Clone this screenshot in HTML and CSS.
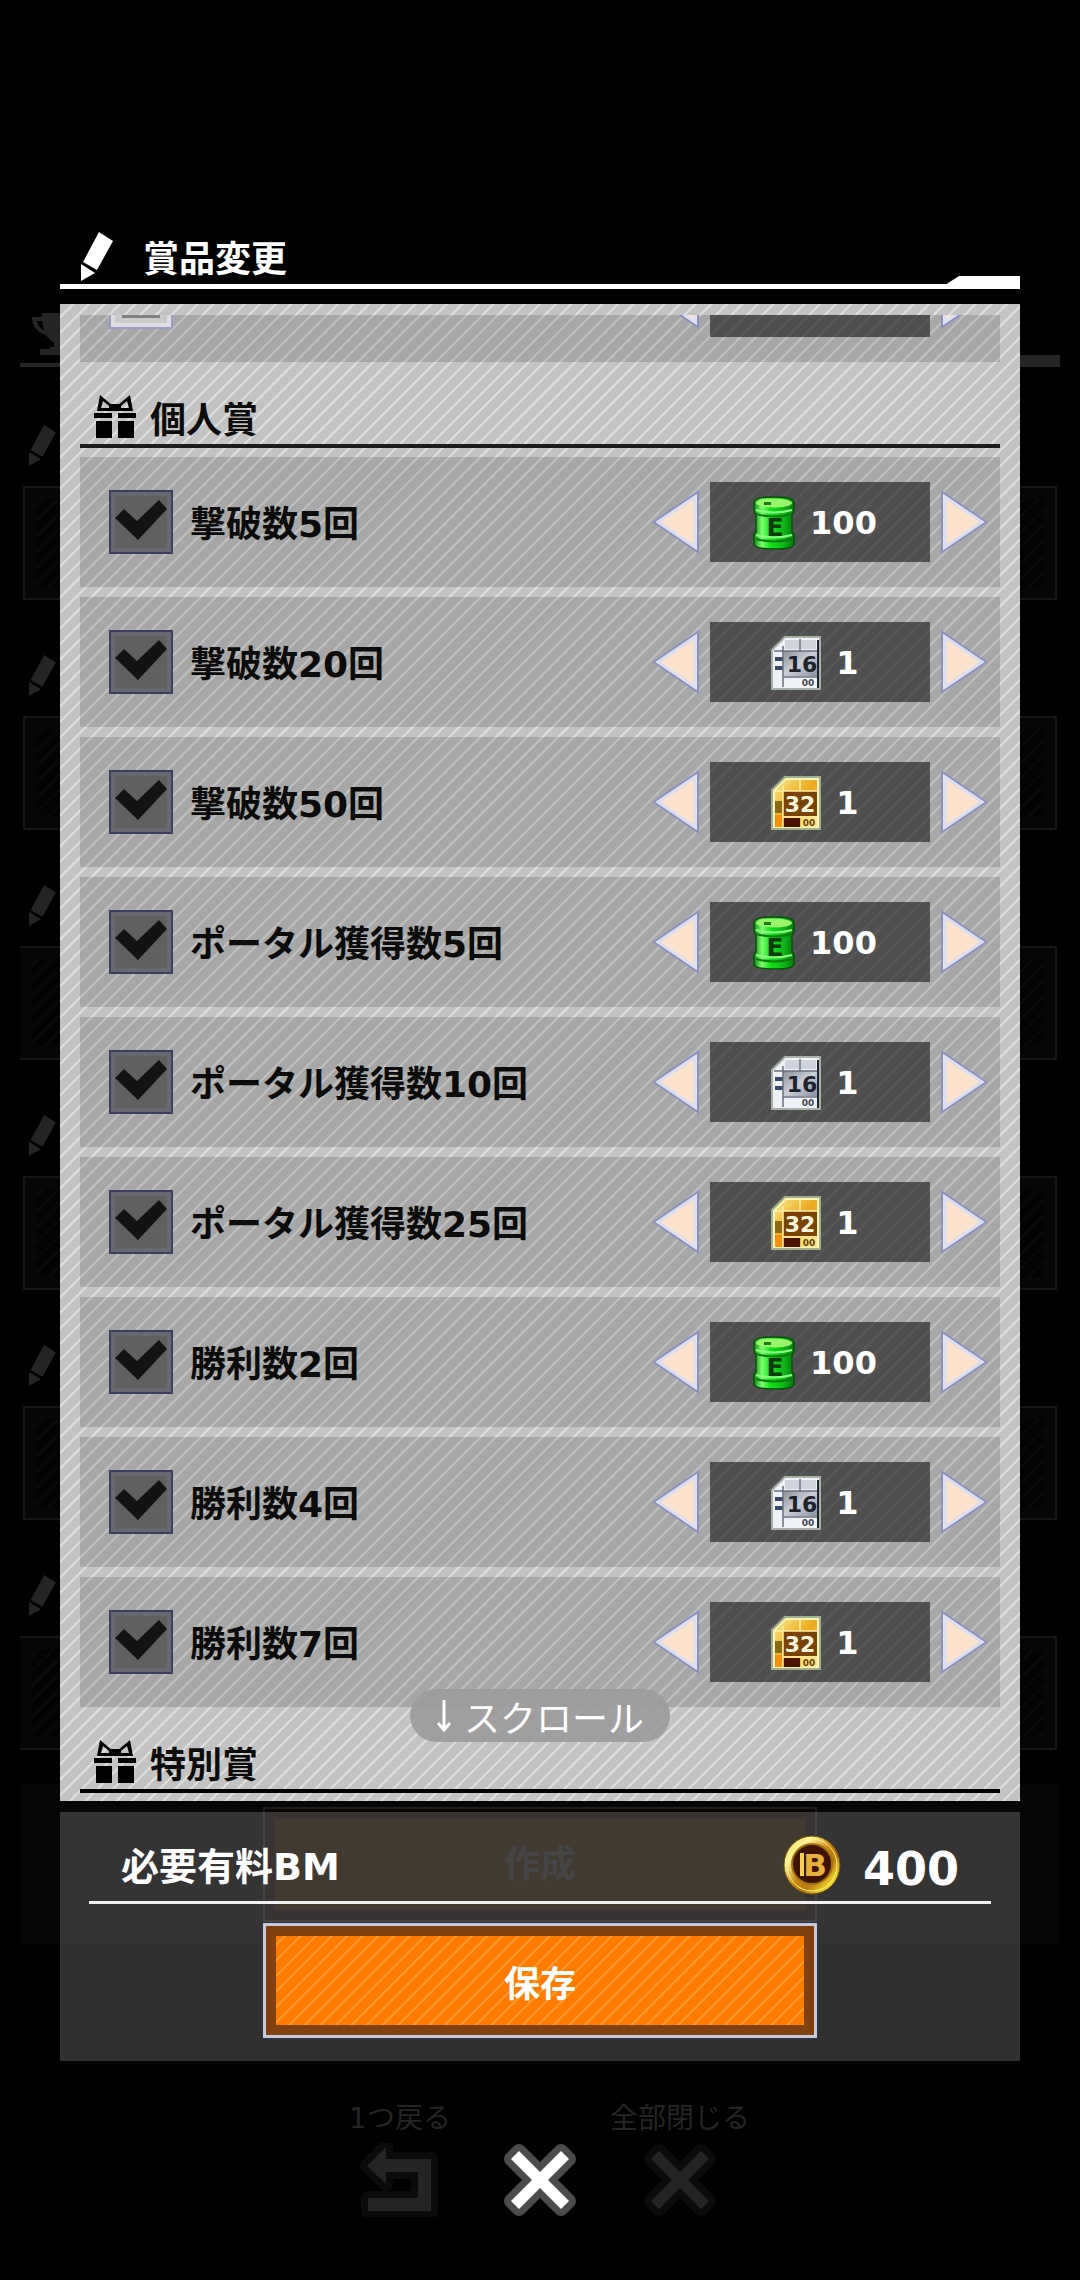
FILE: index.html
```html
<!DOCTYPE html>
<html lang="ja">
<head>
  <meta charset="UTF-8" />
  <meta name="viewport" content="width=device-width, initial-scale=1.0"/>
  <title>賞品変更</title>
  <link rel="stylesheet" href="styles.css">
</head>
<body>

  <!-- shared gradients -->
  <svg class="gradients" width="0" height="0" aria-hidden="true">
    <defs>
      <linearGradient id="barrelFill">
        <stop offset="0" stop-color="#0b8a10"/>
        <stop offset="0.2" stop-color="#7dff70"/>
        <stop offset="0.4" stop-color="#12e41a"/>
        <stop offset="0.75" stop-color="#0fb418"/>
        <stop offset="1" stop-color="#077a0c"/>
      </linearGradient>
      <linearGradient id="silverFill" x1="0" y1="0" x2="1" y2="1">
        <stop offset="0" stop-color="#8b9099"/>
        <stop offset="0.5" stop-color="#c9ced8"/>
        <stop offset="1" stop-color="#8a909c"/>
      </linearGradient>
      <linearGradient id="goldFill" x1="0" y1="0" x2="1" y2="1">
        <stop offset="0" stop-color="#f7e98a"/>
        <stop offset="0.5" stop-color="#eda81c"/>
        <stop offset="1" stop-color="#f8d35a"/>
      </linearGradient>
      <linearGradient id="coinFill" x1="0" y1="0" x2="1" y2="1">
        <stop offset="0" stop-color="#e8c22c"/>
        <stop offset="0.25" stop-color="#fff7a0"/>
        <stop offset="0.5" stop-color="#c8860f"/>
        <stop offset="0.65" stop-color="#b87a12"/>
        <stop offset="0.85" stop-color="#f6e02c"/>
        <stop offset="1" stop-color="#c89a1c"/>
      </linearGradient>
    </defs>
  </svg>

  <!-- shared icons -->
  <svg class="icons" aria-hidden="true">
    <symbol id="pencil" viewBox="0 0 33 49">
      <path d="M19 0L33 9L17 38L3 30ZM1 32L15 41L1 49Z"/>
    </symbol>
    <symbol id="gift" viewBox="0 0 42 43">
      <path d="M2 26h16v17H2zM24 26h16v17H24zM0 18h18v5H0zM24 18h18v5H24zM17 9h8v7H17z"/>
      <path fill-rule="evenodd" d="M6 0L18 10V16H3ZM9 6L7 13H15V11ZM36 0L24 10V16H39ZM33 6L35 13H27V11Z"/>
    </symbol>
    <symbol id="trophy" viewBox="0 0 56 42">
      <path fill-rule="evenodd" d="M10 0H46V4H56C56 14 50 20 42 22C40 26 36 28 34 29V34H38V36H48V42H8V36H18V34H22V29C18 28 16 25 14 22C6 20 0 14 0 4H10ZM10 8H5C6 13 8 15 12 17Z"/>
    </symbol>
    <symbol id="arrow-left" viewBox="0 0 47 64">
      <path fill="#fde3cc" stroke="#8890c4" stroke-width="2" d="M2 32L46 2V62Z"/>
      <path fill="#fde3cc" stroke="#dcdff2" stroke-width="3" d="M6 32L43 7V57Z"/>
    </symbol>
    <symbol id="arrow-right" viewBox="0 0 47 64">
      <path fill="#fde3cc" stroke="#8890c4" stroke-width="2" d="M45 32L1 2V62Z"/>
      <path fill="#fde3cc" stroke="#dcdff2" stroke-width="3" d="M41 32L4 7V57Z"/>
    </symbol>
    <symbol id="barrel" viewBox="0 0 42 54">
      <path fill="url(#barrelFill)" stroke="#07520a" stroke-width="1.5" d="M1 6Q1 1 21 1T41 6V15Q41 17 39 18V36Q41 37 41 39V48Q41 53 21 53T1 48V39Q1 37 3 36V18Q1 17 1 15Z"/>
      <ellipse cx="21" cy="7" rx="18" ry="4.5" fill="#9af56a"/>
      <path fill="#1c7a18" d="M11 6h7v3h-7z"/>
      <path fill="none" stroke="#8bff80" stroke-width="2" d="M3 14Q21 19 39 14M3 39Q21 44 39 39"/>
      <path fill="none" stroke="#087a0d" stroke-width="2" d="M3 18Q21 23 39 18M3 43Q21 48 39 43"/>
      <text x="22" y="40" text-anchor="middle" class="glyph" font-size="25" fill="#063c08">E</text>
    </symbol>
    <symbol id="chip16" viewBox="0 0 50 54">
      <path fill="#eef1f6" stroke="#a9b0a8" stroke-width="2" d="M1 14L14 1H49V53H1Z"/>
      <path fill="#cfd4dc" d="M14 4h14v9H14zM30 4h15v9H30z"/>
      <path fill="url(#silverFill)" d="M12 15h34v25H12z"/>
      <path fill="#3a4a68" d="M4 21h8v4H4zM4 30h8v4H4z"/>
      <path stroke="#69707e" stroke-width="1.5" fill="none" d="M12 10V51M29 3V15M3 15H46M12 41H46"/>
      <path fill="#22262e" d="M46 4h2v48h-2z"/>
      <text x="31" y="36" text-anchor="middle" class="glyph" font-size="22" fill="#1d222c">16</text>
      <path fill="#f4f6fa" d="M29 42h16v9H29z"/>
      <text x="37" y="50" text-anchor="middle" class="glyph" font-size="9" fill="#3c4352">00</text>
    </symbol>
    <symbol id="chip32" viewBox="0 0 50 54">
      <path fill="#fff5b8" stroke="#9fb08a" stroke-width="2" d="M1 14L14 1H49V53H1Z"/>
      <path fill="url(#goldFill)" d="M4 15L15 4H46V51H4Z"/>
      <path fill="#8a6a10" d="M4 25h7v12H4z"/>
      <path fill="#f58f10" d="M4 39h7v12H4z"/>
      <path fill="#7a4204" d="M12 15h34v25H12z"/>
      <path fill="#4a1400" d="M12 42h17v9H12z"/>
      <path stroke="#fff0a8" stroke-width="1.5" fill="none" d="M12 10V51M29 3V15M3 15H46M12 41H46"/>
      <text x="29" y="36" text-anchor="middle" class="glyph" font-size="22" fill="#fff6dc">32</text>
      <path fill="#fbe48a" d="M30 42h16v9H30z"/>
      <text x="38" y="50" text-anchor="middle" class="glyph" font-size="9" fill="#6a3c04">00</text>
    </symbol>
    <symbol id="cross" viewBox="0 0 74 74">
      <path class="outlined" d="M16 8L37 29L58 8L66 16L45 37L66 58L58 66L37 45L16 66L8 58L29 37L8 16Z"/>
    </symbol>
    <symbol id="back" viewBox="0 0 80 74">
      <path class="outlined" d="M7 23L26 4V16H71V68H8V55H58V29H26V41Z"/>
    </symbol>
  </svg>

  <!-- dimmed screen behind the dialog -->
  <div class="backdrop" aria-hidden="true">
    <div class="bg-heading"><svg class="bg-trophy"><use href="#trophy"/></svg></div>
    <div class="bg-item"><svg><use href="#pencil"/></svg><div class="bg-box"></div></div>
    <div class="bg-item"><svg><use href="#pencil"/></svg><div class="bg-box"></div></div>
    <div class="bg-item flat"><svg><use href="#pencil"/></svg><div class="bg-box"></div></div>
    <div class="bg-item"><svg><use href="#pencil"/></svg><div class="bg-box"></div></div>
    <div class="bg-item"><svg><use href="#pencil"/></svg><div class="bg-box"></div></div>
    <div class="bg-item flat"><svg><use href="#pencil"/></svg><div class="bg-box"></div></div>
    <div class="bg-create"><div class="bg-button">作成</div></div>
  </div>

  <main class="dialog">
    <header class="dialog-title">
      <svg class="pencil"><use href="#pencil"/></svg>
      <h1>賞品変更</h1>
    </header>

    <section class="panel">
      <div class="list">
        <div class="row">
          <input type="checkbox" class="check open" aria-label="賞品">
          <div class="stepper">
            <button class="arrow" aria-label="前へ"><svg><use href="#arrow-left"/></svg></button>
            <div class="value"></div>
            <button class="arrow" aria-label="次へ"><svg><use href="#arrow-right"/></svg></button>
          </div>
        </div>

        <h2 class="section"><svg class="gift"><use href="#gift"/></svg>個人賞</h2>

        <div class="row">
          <input type="checkbox" class="check" id="kill5" checked>
          <label for="kill5">撃破数5回</label>
          <div class="stepper">
            <button class="arrow" aria-label="前へ"><svg><use href="#arrow-left"/></svg></button>
            <div class="value"><svg class="barrel"><use href="#barrel"/></svg>100</div>
            <button class="arrow" aria-label="次へ"><svg><use href="#arrow-right"/></svg></button>
          </div>
        </div>
        <div class="row">
          <input type="checkbox" class="check" id="kill20" checked>
          <label for="kill20">撃破数20回</label>
          <div class="stepper">
            <button class="arrow" aria-label="前へ"><svg><use href="#arrow-left"/></svg></button>
            <div class="value"><svg class="chip"><use href="#chip16"/></svg>1</div>
            <button class="arrow" aria-label="次へ"><svg><use href="#arrow-right"/></svg></button>
          </div>
        </div>
        <div class="row">
          <input type="checkbox" class="check" id="kill50" checked>
          <label for="kill50">撃破数50回</label>
          <div class="stepper">
            <button class="arrow" aria-label="前へ"><svg><use href="#arrow-left"/></svg></button>
            <div class="value"><svg class="chip"><use href="#chip32"/></svg>1</div>
            <button class="arrow" aria-label="次へ"><svg><use href="#arrow-right"/></svg></button>
          </div>
        </div>
        <div class="row">
          <input type="checkbox" class="check" id="portal5" checked>
          <label for="portal5">ポータル獲得数5回</label>
          <div class="stepper">
            <button class="arrow" aria-label="前へ"><svg><use href="#arrow-left"/></svg></button>
            <div class="value"><svg class="barrel"><use href="#barrel"/></svg>100</div>
            <button class="arrow" aria-label="次へ"><svg><use href="#arrow-right"/></svg></button>
          </div>
        </div>
        <div class="row">
          <input type="checkbox" class="check" id="portal10" checked>
          <label for="portal10">ポータル獲得数10回</label>
          <div class="stepper">
            <button class="arrow" aria-label="前へ"><svg><use href="#arrow-left"/></svg></button>
            <div class="value"><svg class="chip"><use href="#chip16"/></svg>1</div>
            <button class="arrow" aria-label="次へ"><svg><use href="#arrow-right"/></svg></button>
          </div>
        </div>
        <div class="row">
          <input type="checkbox" class="check" id="portal25" checked>
          <label for="portal25">ポータル獲得数25回</label>
          <div class="stepper">
            <button class="arrow" aria-label="前へ"><svg><use href="#arrow-left"/></svg></button>
            <div class="value"><svg class="chip"><use href="#chip32"/></svg>1</div>
            <button class="arrow" aria-label="次へ"><svg><use href="#arrow-right"/></svg></button>
          </div>
        </div>
        <div class="row">
          <input type="checkbox" class="check" id="win2" checked>
          <label for="win2">勝利数2回</label>
          <div class="stepper">
            <button class="arrow" aria-label="前へ"><svg><use href="#arrow-left"/></svg></button>
            <div class="value"><svg class="barrel"><use href="#barrel"/></svg>100</div>
            <button class="arrow" aria-label="次へ"><svg><use href="#arrow-right"/></svg></button>
          </div>
        </div>
        <div class="row">
          <input type="checkbox" class="check" id="win4" checked>
          <label for="win4">勝利数4回</label>
          <div class="stepper">
            <button class="arrow" aria-label="前へ"><svg><use href="#arrow-left"/></svg></button>
            <div class="value"><svg class="chip"><use href="#chip16"/></svg>1</div>
            <button class="arrow" aria-label="次へ"><svg><use href="#arrow-right"/></svg></button>
          </div>
        </div>
        <div class="row">
          <input type="checkbox" class="check" id="win7" checked>
          <label for="win7">勝利数7回</label>
          <div class="stepper">
            <button class="arrow" aria-label="前へ"><svg><use href="#arrow-left"/></svg></button>
            <div class="value"><svg class="chip"><use href="#chip32"/></svg>1</div>
            <button class="arrow" aria-label="次へ"><svg><use href="#arrow-right"/></svg></button>
          </div>
        </div>

        <h2 class="section last"><svg class="gift"><use href="#gift"/></svg>特別賞</h2>
      </div>
      <div class="scroll-hint">
        <svg width="16" height="34" viewBox="0 0 16 34"><path d="M8 1V31M2 24L8 31L14 24"/></svg>
        スクロール
      </div>
    </section>

    <footer class="footer">
      <div class="cost">
        <span class="cost-label">必要有料BM</span>
        <svg class="coin" viewBox="0 0 58 60">
          <ellipse cx="29" cy="30" rx="28" ry="29" fill="url(#coinFill)" stroke="#6d5208" stroke-width="1"/>
          <ellipse cx="29" cy="30" rx="25" ry="26" fill="none" stroke="#fff08a" stroke-width="1"/>
          <circle cx="29" cy="29" r="20" fill="#3c1400" stroke="#a0700c" stroke-width="2"/>
          <path fill="#f5cf52" d="M17 18h4v23h-4z"/>
          <text x="32" y="41" text-anchor="middle" class="glyph" font-size="31" fill="#e6b13a">B</text>
        </svg>
        <span class="cost-value">400</span>
      </div>
      <button class="save">保存</button>
    </footer>
  </main>

  <nav class="bottom-nav">
    <button class="nav-btn dim">1つ戻る<svg><use href="#back"/></svg></button>
    <button class="nav-btn" aria-label="閉じる"><svg><use href="#cross"/></svg></button>
    <button class="nav-btn dim">全部閉じる<svg><use href="#cross"/></svg></button>
  </nav>

</body>
</html>
```
FILE: styles.css
```css
* {
  box-sizing: border-box;
}

body {
  position: relative;
  margin: 0;
  padding: 232px 60px 60px;
  background-color: #000;
  color: #fff;
  font-family: "DejaVu Sans", "Noto Sans CJK JP", sans-serif;
  font-weight: bold;
  font-size: 36px;
}

button {
  padding: 0;
  border: none;
  background: none;
  color: inherit;
  font: inherit;
  cursor: pointer;
}

h1,
h2 {
  margin: 0;
  font-size: 36px;
  line-height: 40px;
}

h1 {
  padding-top: 6px;
}

svg {
  display: block;
  flex: none;
}

.gradients {
  position: absolute;
}

.icons {
  display: none;
}

.glyph {
  font-family: "DejaVu Sans", sans-serif;
  font-weight: bold;
}

/* dimmed screen behind */
.backdrop {
  position: absolute;
  top: 313px;
  left: 20px;
  right: 20px;
  color: #242424;
  fill: #242424;
}

.bg-heading {
  position: relative;
  height: 54px;
  margin-bottom: 58px;
  padding-left: 12px;
  border-bottom: 4px solid #242424;
}

.bg-heading::after {
  content: "";
  position: absolute;
  right: 0;
  bottom: -4px;
  width: 75px;
  height: 12px;
  background-color: #242424;
}

.bg-trophy {
  width: 56px;
  height: 42px;
}

.bg-item {
  height: 230px;
}

.bg-item svg {
  width: 28px;
  height: 41px;
  margin: 0 0 20px 8px;
}

.bg-box {
  height: 114px;
  margin: 0 3px;
  border: 2px solid #15161a;
  background: repeating-linear-gradient(135deg, #030303 0 8px, #080808 8px 11px);
  box-shadow: inset 0 0 0 11px #060607;
}

.flat .bg-box {
  border-left: none;
  margin-left: 0;
}

.bg-create {
  height: 160px;
  margin-top: -21px;
  padding-top: 23px;
  background-color: #060606;
}

.bg-button {
  width: 554px;
  height: 115px;
  margin: 0 auto;
  border: 2px solid #1c1c1c;
  background-color: #160d02;
  box-shadow: inset 0 0 0 10px #0c0504;
  color: #1b1b1b;
  line-height: 112px;
  text-align: center;
}

/* dialog */
.dialog {
  position: relative;
}

.dialog-title {
  position: relative;
  display: flex;
  align-items: center;
  gap: 30px;
  height: 57px;
  margin-bottom: 15px;
  padding: 0 20px 3px;
  border-bottom: 5px solid #fff;
}

.dialog-title::after {
  content: "";
  position: absolute;
  right: 0;
  bottom: -5px;
  width: 75px;
  height: 13px;
  background-color: #fff;
  clip-path: polygon(14px 0, 100% 0, 100% 100%, 0 100%, 0 9px);
}

.pencil {
  width: 33px;
  height: 49px;
  fill: #fff;
}

.panel {
  position: relative;
  padding: 11px 20px 8px;
  background: repeating-linear-gradient(135deg, #c3c3c3 0 8px, #e0e0e0 9px 10px, #c3c3c3 11px);
  color: #0c0c0c;
}

.list {
  overflow: hidden;
}

.row {
  display: flex;
  align-items: center;
  height: 130px;
  margin-top: 10px;
  padding: 0 12px 0 29px;
  background-color: rgba(0, 0, 0, 0.14);
}

/* list is scrolled, so the first row is cut by the top edge */
.row:first-child {
  margin-top: -83px;
}

.section + .row {
  margin-top: 9px;
}

.check {
  position: relative;
  flex: none;
  appearance: none;
  width: 64px;
  height: 64px;
  margin: 0;
  border: 2px solid #3c3f5e;
  background-color: #606060;
  box-shadow: inset 0 0 0 4px #686870;
}

.check:checked::after {
  content: "";
  position: absolute;
  inset: 0;
  background-color: #131313;
  clip-path: polygon(4px 26px, 13px 17px, 26px 29px, 48px 8px, 56px 17px, 27px 48px);
}

.check.open {
  border-color: #9a9ec6;
  background-color: #cacaca;
  box-shadow: inset 0 0 0 4px #dcdce2;
}

.check.open::after {
  content: "";
  position: absolute;
  left: 11px;
  right: 11px;
  bottom: 9px;
  height: 3px;
  background-color: #808080;
}

.row label {
  margin-left: 17px;
  padding-bottom: 2px;
  white-space: nowrap;
}

.stepper {
  display: flex;
  align-items: center;
  gap: 11px;
  margin-left: auto;
}

.arrow,
.arrow svg {
  width: 47px;
  height: 64px;
}

.value {
  display: flex;
  align-items: center;
  justify-content: center;
  gap: 15px;
  width: 220px;
  height: 80px;
  padding: 2px 10px 0 0;
  background-color: rgba(20, 20, 20, 0.6);
  color: #fff;
  font-size: 32px;
}

.barrel {
  width: 42px;
  height: 54px;
}

.chip {
  width: 50px;
  height: 54px;
}

.section {
  display: flex;
  align-items: flex-end;
  gap: 14px;
  height: 86px;
  padding: 0 14px 3px;
  border-bottom: 4px solid #1c1c1c;
}

.section.last {
  border-color: #000;
}

.gift {
  width: 42px;
  height: 43px;
  margin-bottom: 3px;
}

.scroll-hint {
  position: absolute;
  left: 50%;
  bottom: 59px;
  display: flex;
  align-items: center;
  justify-content: center;
  gap: 12px;
  width: 260px;
  height: 53px;
  border-radius: 27px;
  background-color: rgba(156, 156, 156, 0.92);
  color: #fff;
  font-weight: normal;
  transform: translateX(-50%);
  white-space: nowrap;
}

.scroll-hint path {
  fill: none;
  stroke: #fff;
  stroke-width: 3;
}

.footer {
  margin-top: 11px;
  padding: 0 29px 23px;
  background-color: rgba(255, 255, 255, 0.19);
}

.cost {
  display: flex;
  align-items: center;
  height: 92px;
  padding: 23px 32px 6px;
  border-bottom: 3px solid #f0f0f0;
}

.cost-label {
  flex: 1;
  padding-top: 4px;
  font-size: 38px;
  line-height: 44px;
}

.coin {
  width: 58px;
  height: 60px;
  margin-right: 22px;
}

.cost-value {
  padding-top: 8px;
  font-size: 46px;
  line-height: 44px;
}

.save {
  display: block;
  width: 100%;
  max-width: 554px;
  height: 115px;
  margin: 19px auto 0;
  border: 3px solid #c8c8d6;
  outline: 1px solid #26324e;
  background: repeating-linear-gradient(135deg, #ff7b00 0 8px, #ff9a30 9px 10px, #ff7b00 11px);
  box-shadow: inset 0 0 0 10px #80400f;
}

/* bottom buttons */
.bottom-nav {
  position: relative;
  display: flex;
  justify-content: center;
  align-items: flex-end;
  margin-top: 38px;
}

.nav-btn {
  --halo: #4c4c4c;
  display: flex;
  flex-direction: column;
  align-items: center;
  width: 140px;
  font-size: 28px;
  font-weight: normal;
  line-height: 40px;
  white-space: nowrap;
}

.nav-btn svg {
  width: 80px;
  height: 74px;
  margin-top: 4px;
}

.outlined {
  fill: currentColor;
  stroke: var(--halo);
  stroke-width: 14px;
  stroke-linejoin: round;
  paint-order: stroke;
}

.dim {
  --halo: #0b0b0b;
  color: #242424;
}
```
